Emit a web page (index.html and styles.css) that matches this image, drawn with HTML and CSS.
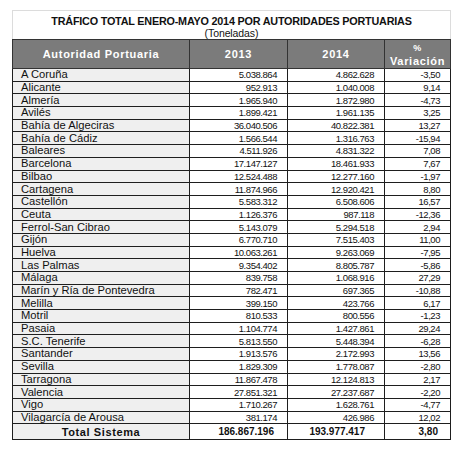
FILE: index.html
```html
<!DOCTYPE html>
<html lang="es">
  <head>
    <meta charset="UTF-8" />
    <meta name="viewport" content="width=device-width, initial-scale=1.0" />
    <title>Tráfico total enero-mayo 2014</title>
    <link rel="stylesheet" href="styles.css">
  </head>
  <body>
    <div class="sheet">
      <div class="titleBox">
        <h3 class="title">TRÁFICO TOTAL ENERO-MAYO 2014 POR AUTORIDADES PORTUARIAS</h3>
        <p class="subtitle">(Toneladas)</p>
      </div>
      <table class="traffic">
        <colgroup>
          <col class="colName" />
          <col class="colY1" />
          <col class="colY2" />
          <col class="colVar" />
        </colgroup>
        <thead>
          <tr class="head">
            <th>Autoridad Portuaria</th>
            <th>2013</th>
            <th>2014</th>
            <th class="varHead"><span class="pct">%</span><br />Variación</th>
          </tr>
        </thead>
        <tbody>
          <tr><td class="name">A Coruña</td><td class="num">5.038.864</td><td class="num">4.862.628</td><td class="num">-3,50</td></tr>
          <tr><td class="name">Alicante</td><td class="num">952.913</td><td class="num">1.040.008</td><td class="num">9,14</td></tr>
          <tr><td class="name">Almería</td><td class="num">1.965.940</td><td class="num">1.872.980</td><td class="num">-4,73</td></tr>
          <tr><td class="name">Avilés</td><td class="num">1.899.421</td><td class="num">1.961.135</td><td class="num">3,25</td></tr>
          <tr><td class="name">Bahía de Algeciras</td><td class="num">36.040.506</td><td class="num">40.822.381</td><td class="num">13,27</td></tr>
          <tr><td class="name">Bahía de Cádiz</td><td class="num">1.566.544</td><td class="num">1.316.763</td><td class="num">-15,94</td></tr>
          <tr><td class="name">Baleares</td><td class="num">4.511.926</td><td class="num">4.831.322</td><td class="num">7,08</td></tr>
          <tr><td class="name">Barcelona</td><td class="num">17.147.127</td><td class="num">18.461.933</td><td class="num">7,67</td></tr>
          <tr><td class="name">Bilbao</td><td class="num">12.524.488</td><td class="num">12.277.160</td><td class="num">-1,97</td></tr>
          <tr><td class="name">Cartagena</td><td class="num">11.874.966</td><td class="num">12.920.421</td><td class="num">8,80</td></tr>
          <tr><td class="name">Castellón</td><td class="num">5.583.312</td><td class="num">6.508.606</td><td class="num">16,57</td></tr>
          <tr><td class="name">Ceuta</td><td class="num">1.126.376</td><td class="num">987.118</td><td class="num">-12,36</td></tr>
          <tr><td class="name">Ferrol-San Cibrao</td><td class="num">5.143.079</td><td class="num">5.294.518</td><td class="num">2,94</td></tr>
          <tr><td class="name">Gijón</td><td class="num">6.770.710</td><td class="num">7.515.403</td><td class="num">11,00</td></tr>
          <tr><td class="name">Huelva</td><td class="num">10.063.261</td><td class="num">9.263.069</td><td class="num">-7,95</td></tr>
          <tr><td class="name">Las Palmas</td><td class="num">9.354.402</td><td class="num">8.805.787</td><td class="num">-5,86</td></tr>
          <tr><td class="name">Málaga</td><td class="num">839.758</td><td class="num">1.068.916</td><td class="num">27,29</td></tr>
          <tr><td class="name">Marín y Ría de Pontevedra</td><td class="num">782.471</td><td class="num">697.365</td><td class="num">-10,88</td></tr>
          <tr><td class="name">Melilla</td><td class="num">399.150</td><td class="num">423.766</td><td class="num">6,17</td></tr>
          <tr><td class="name">Motril</td><td class="num">810.533</td><td class="num">800.556</td><td class="num">-1,23</td></tr>
          <tr><td class="name">Pasaia</td><td class="num">1.104.774</td><td class="num">1.427.861</td><td class="num">29,24</td></tr>
          <tr><td class="name">S.C. Tenerife</td><td class="num">5.813.550</td><td class="num">5.448.394</td><td class="num">-6,28</td></tr>
          <tr><td class="name">Santander</td><td class="num">1.913.576</td><td class="num">2.172.993</td><td class="num">13,56</td></tr>
          <tr><td class="name">Sevilla</td><td class="num">1.829.309</td><td class="num">1.778.087</td><td class="num">-2,80</td></tr>
          <tr><td class="name">Tarragona</td><td class="num">11.867.478</td><td class="num">12.124.813</td><td class="num">2,17</td></tr>
          <tr><td class="name">Valencia</td><td class="num">27.851.321</td><td class="num">27.237.687</td><td class="num">-2,20</td></tr>
          <tr><td class="name">Vigo</td><td class="num">1.710.267</td><td class="num">1.628.761</td><td class="num">-4,77</td></tr>
          <tr><td class="name">Vilagarcía de Arousa</td><td class="num">381.174</td><td class="num">426.986</td><td class="num">12,02</td></tr>
        </tbody>
        <tfoot>
          <tr class="total">
            <td class="totalName">Total Sistema</td>
            <td class="tot1">186.867.196</td>
            <td class="tot2">193.977.417</td>
            <td class="tot3">3,80</td>
          </tr>
        </tfoot>
      </table>
    </div>
  </body>
</html>
```

FILE: styles.css
```css
body {
  margin: 0;
  background: #fff;
  font-family: "Liberation Sans", Arial, sans-serif;
  color: #111;
}
.sheet {
  padding: 10px 0 0 12px;
  width: 439px;
}
.titleBox {
  height: 29px;
  box-sizing: border-box;
  border: 1px solid #dcdcdc;
  border-bottom: none;
  text-align: center;
  padding-top: 4px;
}
.title {
  margin: 0;
  font-size: 10.8px;
  line-height: 12px;
  font-weight: bold;
  letter-spacing: -0.2px;
}
.subtitle {
  margin: 0;
  font-size: 10.5px;
  line-height: 12px;
  letter-spacing: -0.1px;
}
.traffic {
  border-collapse: collapse;
  table-layout: fixed;
  width: 438px;
}
.colName {
  width: 177px;
}
.colY1 {
  width: 98px;
}
.colY2 {
  width: 97px;
}
.colVar {
  width: 66px;
}
.traffic td,
.traffic th {
  border: 1px solid #1e1e1e;
  padding: 0;
}
.head th {
  height: 28px;
  background: #7b7b7b;
  color: #fff;
  font-size: 11px;
  line-height: 13px;
  font-weight: bold;
  letter-spacing: 0.7px;
  border-color: #333;
}
.varHead {
  font-size: 10.5px;
  line-height: 14px;
}
.pct {
  font-size: 9px;
}
.traffic tbody td {
  height: 11.7px;
  line-height: 11px;
}
.name {
  background: #efefef;
  font-size: 11.2px;
  padding-left: 8px !important;
  white-space: nowrap;
}
.num {
  text-align: right;
  font-size: 9.5px;
  letter-spacing: -0.45px;
  padding-right: 10px !important;
}
.total td {
  height: 15px;
  font-weight: bold;
  font-size: 10px;
  text-align: right;
}
.total .totalName {
  background: #efefef;
  text-align: center;
  font-size: 11px;
  letter-spacing: 0.6px;
}
.tot1 {
  padding-right: 13px !important;
}
.tot2 {
  padding-right: 19px !important;
}
.tot3 {
  padding-right: 12px !important;
}
```
